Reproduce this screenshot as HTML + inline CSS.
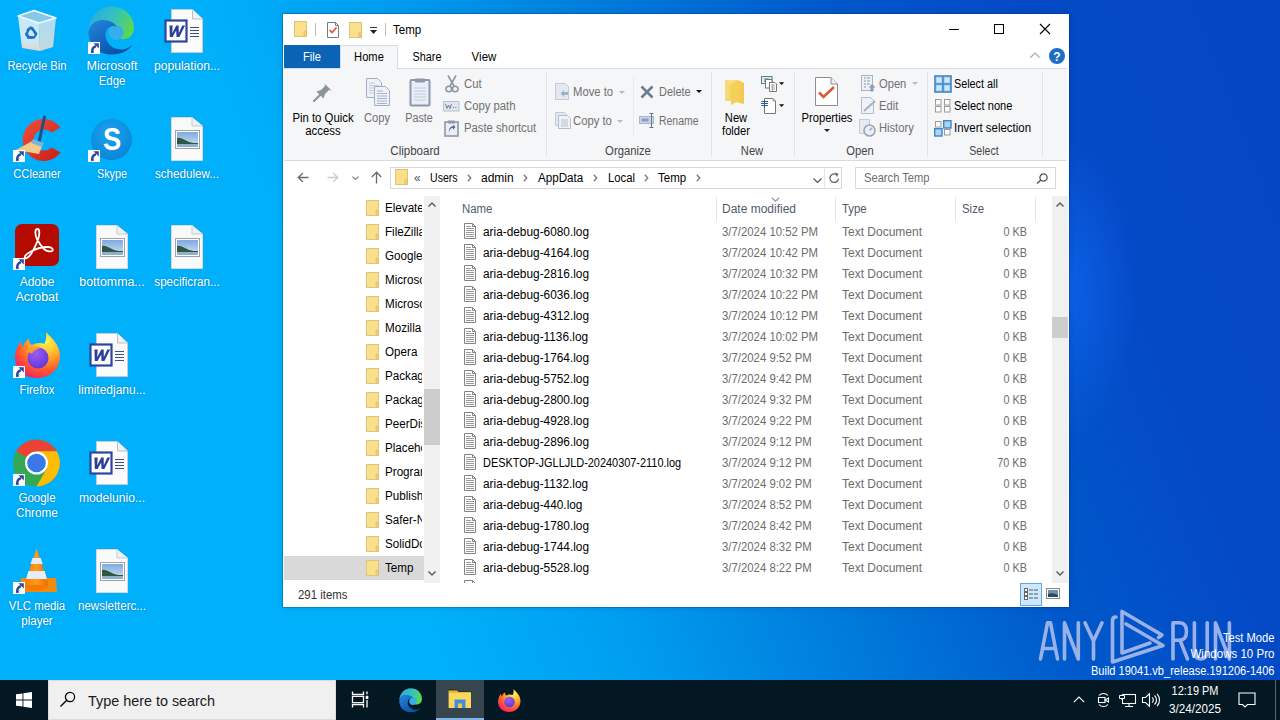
<!DOCTYPE html>
<html><head><meta charset="utf-8">
<style>
*{margin:0;padding:0;box-sizing:border-box}
html,body{width:1280px;height:720px;overflow:hidden}
body{position:relative;font-family:"Liberation Sans",sans-serif;font-size:12px;
background:linear-gradient(69deg,#00b0fa 0%,#00b0fa 30%,#009ef0 42%,#007cdc 56%,#0058ca 71%,#0449c6 84%,#0447c4 100%);}
.a{position:absolute}
.t{position:absolute;white-space:nowrap;line-height:1}
svg{overflow:visible}
</style></head><body>
<svg class="a" style="left:13px;top:6px" width="48" height="48" viewBox="0 0 48 48"><defs><linearGradient id="rbf" x1="0" y1="0" x2="0" y2="1"><stop offset="0" stop-color="#f4f8fb" stop-opacity="0.8"/><stop offset="0.7" stop-color="#eef3f6" stop-opacity="0.85"/><stop offset="1" stop-color="#f6d9c8" stop-opacity="0.9"/></linearGradient><linearGradient id="rbr" x1="0" y1="0" x2="0" y2="1"><stop offset="0" stop-color="#e3ebf0" stop-opacity="0.75"/><stop offset="1" stop-color="#eadfd8" stop-opacity="0.85"/></linearGradient></defs><path d="M5 10L26 17L27 45L9 42Z" fill="url(#rbf)"/><path d="M26 17L43 12L40 41L27 45Z" fill="url(#rbr)"/><path d="M5 10L21 4.5L43 12L26 17Z" fill="#a9cde6" fill-opacity="0.8" stroke="#f2f9fd" stroke-width="1.6" stroke-linejoin="round"/><g fill="#2b78d0"><path d="M14.5 22.5L18 20L21.5 23.5L19.5 25L17 22.8L15.2 25.5L13 24.2Z"/><path d="M22.5 25L24.5 28L22.5 31.5L20 31.5L21.8 28.5L20.5 26.5Z"/><path d="M12.5 27L14.5 26.5L16.5 30H19.5V32.5H15L12 29Z"/></g><g fill="none" stroke="#1f6cc4" stroke-width="2.3" stroke-linecap="round"><path d="M13.5 27.5L16.5 22.5"/><path d="M19 22L23 28"/><path d="M21 31.5H15"/></g></svg>
<div class="t" style="top:59.84px;font-size:12px;color:#fff;left:-63px;width:200px;text-align:center;transform:scaleX(0.93);transform-origin:center;text-shadow:0 0 2px rgba(0,0,0,.35);">Recycle Bin</div>
<svg class="a" style="left:86px;top:4px" width="50" height="52" viewBox="0 0 50 52"><defs><linearGradient id="ega" x1="0" y1="0.2" x2="1" y2="0.6"><stop offset="0" stop-color="#2aa6e6"/><stop offset="0.5" stop-color="#33c2c0"/><stop offset="1" stop-color="#5ed84c"/></linearGradient><linearGradient id="egb" x1="0" y1="0" x2="0.8" y2="1"><stop offset="0" stop-color="#2388dc"/><stop offset="0.6" stop-color="#1262bd"/><stop offset="1" stop-color="#0f4c9e"/></linearGradient></defs><path d="M2.5 28C2.5 13 13 2.5 25.5 2.5C38 2.5 48 12 48 23.5C48 30.5 43.5 35 37 35C31 35 27.5 31.5 27.5 27.5C27.5 21 21 16.5 15 16.5C9 16.5 4 21 2.5 28Z" fill="url(#ega)"/><circle cx="30" cy="28.5" r="7.5" fill="#36aee8"/><path d="M2.5 28C4 20 10 16 16.5 16C24 16 30 19.5 30.5 23C27 20.5 19.5 23 19.5 31C19.5 40 28 46.5 37 45.5C41 45 44 43 46.5 40.5C42.5 47 35 50.5 25.5 50.5C12 50.5 2.5 40.5 2.5 28Z" fill="url(#egb)"/></svg>
<svg class="a" style="left:88px;top:42px" width="12" height="12" viewBox="0 0 12 12"><rect x="0" y="0" width="12" height="12" fill="#fbfdff"/><path d="M4.6 11C3.6 7.5 5 4.8 8 4.2" fill="none" stroke="#2f4a94" stroke-width="2.6"/><path d="M5.5 1.3H10.8V6.6Z" fill="#2f4a94"/></svg>
<div class="t" style="top:59.84px;font-size:12px;color:#fff;left:12px;width:200px;text-align:center;transform:scaleX(1.05);transform-origin:center;text-shadow:0 0 2px rgba(0,0,0,.35);">Microsoft</div>
<div class="t" style="top:74.84px;font-size:12px;color:#fff;left:12px;width:200px;text-align:center;transform:scaleX(0.95);transform-origin:center;text-shadow:0 0 2px rgba(0,0,0,.35);">Edge</div>
<svg class="a" style="left:164px;top:6px" width="48" height="48" viewBox="0 0 48 48"><path d="M7.5 3.5H28.5L38.5 13V46.5H7.5Z" fill="#fbfbfb" stroke="#c8ccd2"/><path d="M28.5 3.5V13H38.5" fill="#f0f2f4" stroke="#b9bec6"/><path d="M26 21.5H35M26 24.5H35M26 27.5H35M26 30.5H35" stroke="#3b4f8c" stroke-width="1.1"/><rect x="1.5" y="14.5" width="21" height="21" fill="#fff" stroke="#2c45a0" stroke-width="2.2"/><path d="M4.2 19.5H7.4L8.6 27.2L11 19.5H13.4L15.2 27.2L17 19.5H19.8L16.6 31H13.7L12 24.5L9.8 31H7Z" fill="#2a3f98" transform="translate(5.4 0) skewX(-12)"/></svg>
<div class="t" style="top:59.84px;font-size:12px;color:#fff;left:87px;width:200px;text-align:center;transform:scaleX(1.01);transform-origin:center;text-shadow:0 0 2px rgba(0,0,0,.35);">population...</div>
<svg class="a" style="left:13px;top:114px" width="48" height="48" viewBox="0 0 48 48"><defs><linearGradient id="cc" x1="0" y1="0" x2="1" y2="1"><stop offset="0" stop-color="#f0503a"/><stop offset="1" stop-color="#c81e18"/></linearGradient></defs><path d="M47.5 13.5A21 21 0 1 0 47.5 38.5L38.5 33.5A10.5 10.5 0 1 1 38.5 18.5Z" fill="url(#cc)"/><path d="M31.5 3L26 28" stroke="#1d4f8c" stroke-width="3" stroke-linecap="round"/><path d="M21 26L30 30L26 40L3 36Z" fill="#f3c98c"/><path d="M20 25L31 29L29 33L18 29Z" fill="#7fb2d8"/></svg>
<svg class="a" style="left:13px;top:150px" width="12" height="12" viewBox="0 0 12 12"><rect x="0" y="0" width="12" height="12" fill="#fbfdff"/><path d="M4.6 11C3.6 7.5 5 4.8 8 4.2" fill="none" stroke="#2f4a94" stroke-width="2.6"/><path d="M5.5 1.3H10.8V6.6Z" fill="#2f4a94"/></svg>
<div class="t" style="top:167.84px;font-size:12px;color:#fff;left:-63px;width:200px;text-align:center;transform:scaleX(0.94);transform-origin:center;text-shadow:0 0 2px rgba(0,0,0,.35);">CCleaner</div>
<svg class="a" style="left:88px;top:114px" width="48" height="48" viewBox="0 0 48 48"><defs><radialGradient id="sk" cx="0.45" cy="0.35" r="0.7"><stop offset="0" stop-color="#1aa3ef"/><stop offset="1" stop-color="#0a84d8"/></radialGradient></defs><circle cx="23.5" cy="25.5" r="20.5" fill="url(#sk)"/><text x="0" y="0" font-family="Liberation Sans" font-weight="bold" font-size="31" fill="#fff" text-anchor="middle" transform="translate(24 36) scale(0.88 1)">S</text></svg>
<svg class="a" style="left:88px;top:150px" width="12" height="12" viewBox="0 0 12 12"><rect x="0" y="0" width="12" height="12" fill="#fbfdff"/><path d="M4.6 11C3.6 7.5 5 4.8 8 4.2" fill="none" stroke="#2f4a94" stroke-width="2.6"/><path d="M5.5 1.3H10.8V6.6Z" fill="#2f4a94"/></svg>
<div class="t" style="top:167.84px;font-size:12px;color:#fff;left:12px;width:200px;text-align:center;transform:scaleX(0.9);transform-origin:center;text-shadow:0 0 2px rgba(0,0,0,.35);">Skype</div>
<svg class="a" style="left:164px;top:114px" width="48" height="48" viewBox="0 0 48 48"><path d="M7.5 3.5H28L38.5 12V46.5H7.5Z" fill="#f9f9fa" stroke="#d6d9dd"/><path d="M28 3.5V12H38.5" fill="#eef0f3" stroke="#c6cbd1"/><rect x="11.5" y="16.5" width="24" height="18" fill="#fff" stroke="#9aa3ad"/><defs><linearGradient id="sky" x1="0" y1="0" x2="0" y2="1"><stop offset="0" stop-color="#7fa9e0"/><stop offset="1" stop-color="#d0e2f2"/></linearGradient></defs><rect x="13" y="18" width="21" height="15" fill="url(#sky)"/><path d="M13 24C17 23 20 26 25 28C28 29 31 29 34 29V31H13Z" fill="#2f5640"/><rect x="13" y="30" width="21" height="3" fill="#8fb0cf"/></svg>
<div class="t" style="top:167.84px;font-size:12px;color:#fff;left:87px;width:200px;text-align:center;transform:scaleX(0.97);transform-origin:center;text-shadow:0 0 2px rgba(0,0,0,.35);">schedulew...</div>
<svg class="a" style="left:13px;top:222px" width="48" height="48" viewBox="0 0 48 48"><rect x="2" y="2" width="44" height="42" rx="7" fill="#b30b00"/><path d="M24.5 7C21.5 7 22 13 24 17C26 21 29 25 31 27C33 29 37 30 39 29C41 28 39 25 35 25C30 25 22 27 17 30C13 32 11 35 12 36C13 37 16 35 18 32C21 27 24 21 25.5 16C26.5 12 27 7 24.5 7Z" fill="none" stroke="#fff" stroke-width="1.8"/></svg>
<svg class="a" style="left:13px;top:258px" width="12" height="12" viewBox="0 0 12 12"><rect x="0" y="0" width="12" height="12" fill="#fbfdff"/><path d="M4.6 11C3.6 7.5 5 4.8 8 4.2" fill="none" stroke="#2f4a94" stroke-width="2.6"/><path d="M5.5 1.3H10.8V6.6Z" fill="#2f4a94"/></svg>
<div class="t" style="top:275.84px;font-size:12px;color:#fff;left:-63px;width:200px;text-align:center;text-shadow:0 0 2px rgba(0,0,0,.35);">Adobe</div>
<div class="t" style="top:290.84px;font-size:12px;color:#fff;left:-63px;width:200px;text-align:center;transform:scaleX(1.04);transform-origin:center;text-shadow:0 0 2px rgba(0,0,0,.35);">Acrobat</div>
<svg class="a" style="left:89px;top:222px" width="48" height="48" viewBox="0 0 48 48"><path d="M7.5 3.5H28L38.5 12V46.5H7.5Z" fill="#f9f9fa" stroke="#d6d9dd"/><path d="M28 3.5V12H38.5" fill="#eef0f3" stroke="#c6cbd1"/><rect x="11.5" y="16.5" width="24" height="18" fill="#fff" stroke="#9aa3ad"/><defs><linearGradient id="sky" x1="0" y1="0" x2="0" y2="1"><stop offset="0" stop-color="#7fa9e0"/><stop offset="1" stop-color="#d0e2f2"/></linearGradient></defs><rect x="13" y="18" width="21" height="15" fill="url(#sky)"/><path d="M13 24C17 23 20 26 25 28C28 29 31 29 34 29V31H13Z" fill="#2f5640"/><rect x="13" y="30" width="21" height="3" fill="#8fb0cf"/></svg>
<div class="t" style="top:275.84px;font-size:12px;color:#fff;left:12px;width:200px;text-align:center;transform:scaleX(1.03);transform-origin:center;text-shadow:0 0 2px rgba(0,0,0,.35);">bottomma...</div>
<svg class="a" style="left:164px;top:222px" width="48" height="48" viewBox="0 0 48 48"><path d="M7.5 3.5H28L38.5 12V46.5H7.5Z" fill="#f9f9fa" stroke="#d6d9dd"/><path d="M28 3.5V12H38.5" fill="#eef0f3" stroke="#c6cbd1"/><rect x="11.5" y="16.5" width="24" height="18" fill="#fff" stroke="#9aa3ad"/><defs><linearGradient id="sky" x1="0" y1="0" x2="0" y2="1"><stop offset="0" stop-color="#7fa9e0"/><stop offset="1" stop-color="#d0e2f2"/></linearGradient></defs><rect x="13" y="18" width="21" height="15" fill="url(#sky)"/><path d="M13 24C17 23 20 26 25 28C28 29 31 29 34 29V31H13Z" fill="#2f5640"/><rect x="13" y="30" width="21" height="3" fill="#8fb0cf"/></svg>
<div class="t" style="top:275.84px;font-size:12px;color:#fff;left:87px;width:200px;text-align:center;transform:scaleX(0.97);transform-origin:center;text-shadow:0 0 2px rgba(0,0,0,.35);">specificran...</div>
<svg class="a" style="left:13px;top:330px" width="48" height="48" viewBox="0 0 48 48"><defs><radialGradient id="ff1" cx="0.7" cy="0.2" r="0.9"><stop offset="0" stop-color="#fff44f"/><stop offset="0.35" stop-color="#ffb52c"/><stop offset="0.7" stop-color="#ff5a2c"/><stop offset="1" stop-color="#f5196e"/></radialGradient><radialGradient id="ff2" cx="0.4" cy="0.3" r="0.8"><stop offset="0" stop-color="#9d5cf5"/><stop offset="1" stop-color="#5b35d0"/></radialGradient></defs><path d="M33 2C38 8 47 14 47 26C47 39 37 48 24 48C11 48 2 39 2 27C2 19 6 14 8 11C8 14 9 16 10 17C11 13 13 10 16 9C16 12 17 14 19 15C22 13 28 12 31 14C34 10 33 5 33 2Z" fill="url(#ff1)"/><circle cx="25" cy="28" r="10.5" fill="url(#ff2)"/><path d="M12 22C15 18 22 16 27 19C23 19 20 21 19 24C17 22 14 22 12 22Z" fill="#ff9a2a"/></svg>
<svg class="a" style="left:13px;top:366px" width="12" height="12" viewBox="0 0 12 12"><rect x="0" y="0" width="12" height="12" fill="#fbfdff"/><path d="M4.6 11C3.6 7.5 5 4.8 8 4.2" fill="none" stroke="#2f4a94" stroke-width="2.6"/><path d="M5.5 1.3H10.8V6.6Z" fill="#2f4a94"/></svg>
<div class="t" style="top:383.84px;font-size:12px;color:#fff;left:-63px;width:200px;text-align:center;transform:scaleX(0.95);transform-origin:center;text-shadow:0 0 2px rgba(0,0,0,.35);">Firefox</div>
<svg class="a" style="left:89px;top:330px" width="48" height="48" viewBox="0 0 48 48"><path d="M7.5 3.5H28.5L38.5 13V46.5H7.5Z" fill="#fbfbfb" stroke="#c8ccd2"/><path d="M28.5 3.5V13H38.5" fill="#f0f2f4" stroke="#b9bec6"/><path d="M26 21.5H35M26 24.5H35M26 27.5H35M26 30.5H35" stroke="#3b4f8c" stroke-width="1.1"/><rect x="1.5" y="14.5" width="21" height="21" fill="#fff" stroke="#2c45a0" stroke-width="2.2"/><path d="M4.2 19.5H7.4L8.6 27.2L11 19.5H13.4L15.2 27.2L17 19.5H19.8L16.6 31H13.7L12 24.5L9.8 31H7Z" fill="#2a3f98" transform="translate(5.4 0) skewX(-12)"/></svg>
<div class="t" style="top:383.84px;font-size:12px;color:#fff;left:12px;width:200px;text-align:center;text-shadow:0 0 2px rgba(0,0,0,.35);">limitedjanu...</div>
<svg class="a" style="left:13px;top:438px" width="48" height="48" viewBox="0 0 48 48"><circle cx="23.5" cy="25" r="23.5" fill="#34a853"/><path d="M23.5 25L3.2 13.3A23.5 23.5 0 0 1 43.8 13.3H23.5Z" fill="#ea4335"/><path d="M23.5 13.3H43.8A23.5 23.5 0 0 1 23.5 48.5L33.6 31Z" fill="#fbbc04"/><circle cx="23.5" cy="25" r="11.5" fill="#fff"/><circle cx="23.5" cy="25" r="9.3" fill="#3b78e7"/></svg>
<svg class="a" style="left:13px;top:474px" width="12" height="12" viewBox="0 0 12 12"><rect x="0" y="0" width="12" height="12" fill="#fbfdff"/><path d="M4.6 11C3.6 7.5 5 4.8 8 4.2" fill="none" stroke="#2f4a94" stroke-width="2.6"/><path d="M5.5 1.3H10.8V6.6Z" fill="#2f4a94"/></svg>
<div class="t" style="top:491.84px;font-size:12px;color:#fff;left:-63px;width:200px;text-align:center;transform:scaleX(0.96);transform-origin:center;text-shadow:0 0 2px rgba(0,0,0,.35);">Google</div>
<div class="t" style="top:506.84px;font-size:12px;color:#fff;left:-63px;width:200px;text-align:center;transform:scaleX(0.98);transform-origin:center;text-shadow:0 0 2px rgba(0,0,0,.35);">Chrome</div>
<svg class="a" style="left:89px;top:438px" width="48" height="48" viewBox="0 0 48 48"><path d="M7.5 3.5H28.5L38.5 13V46.5H7.5Z" fill="#fbfbfb" stroke="#c8ccd2"/><path d="M28.5 3.5V13H38.5" fill="#f0f2f4" stroke="#b9bec6"/><path d="M26 21.5H35M26 24.5H35M26 27.5H35M26 30.5H35" stroke="#3b4f8c" stroke-width="1.1"/><rect x="1.5" y="14.5" width="21" height="21" fill="#fff" stroke="#2c45a0" stroke-width="2.2"/><path d="M4.2 19.5H7.4L8.6 27.2L11 19.5H13.4L15.2 27.2L17 19.5H19.8L16.6 31H13.7L12 24.5L9.8 31H7Z" fill="#2a3f98" transform="translate(5.4 0) skewX(-12)"/></svg>
<div class="t" style="top:491.84px;font-size:12px;color:#fff;left:12px;width:200px;text-align:center;transform:scaleX(1.01);transform-origin:center;text-shadow:0 0 2px rgba(0,0,0,.35);">modelunio...</div>
<svg class="a" style="left:13px;top:546px" width="48" height="48" viewBox="0 0 48 48"><defs><linearGradient id="vl" x1="0" x2="1"><stop offset="0" stop-color="#f57c00"/><stop offset="0.5" stop-color="#ff9a1f"/><stop offset="1" stop-color="#e86a00"/></linearGradient></defs><path d="M8 32H43L44 46H7Z" fill="#f08a10"/><path d="M23.6 2.5L35.5 39H11.5Z" fill="url(#vl)"/><path d="M19.5 12H27.7L29.7 18H17.5Z" fill="#e8edf5"/><path d="M15.5 25H31.7L34 33H13Z" fill="#e8edf5"/><path d="M11.5 39H35.5Q34 45 23.6 45Q13 45 11.5 39Z" fill="#f57c00"/></svg>
<svg class="a" style="left:13px;top:582px" width="12" height="12" viewBox="0 0 12 12"><rect x="0" y="0" width="12" height="12" fill="#fbfdff"/><path d="M4.6 11C3.6 7.5 5 4.8 8 4.2" fill="none" stroke="#2f4a94" stroke-width="2.6"/><path d="M5.5 1.3H10.8V6.6Z" fill="#2f4a94"/></svg>
<div class="t" style="top:599.84px;font-size:12px;color:#fff;left:-63px;width:200px;text-align:center;transform:scaleX(0.95);transform-origin:center;text-shadow:0 0 2px rgba(0,0,0,.35);">VLC media</div>
<div class="t" style="top:614.84px;font-size:12px;color:#fff;left:-63px;width:200px;text-align:center;transform:scaleX(0.96);transform-origin:center;text-shadow:0 0 2px rgba(0,0,0,.35);">player</div>
<svg class="a" style="left:89px;top:546px" width="48" height="48" viewBox="0 0 48 48"><path d="M7.5 3.5H28L38.5 12V46.5H7.5Z" fill="#f9f9fa" stroke="#d6d9dd"/><path d="M28 3.5V12H38.5" fill="#eef0f3" stroke="#c6cbd1"/><rect x="11.5" y="16.5" width="24" height="18" fill="#fff" stroke="#9aa3ad"/><defs><linearGradient id="sky" x1="0" y1="0" x2="0" y2="1"><stop offset="0" stop-color="#7fa9e0"/><stop offset="1" stop-color="#d0e2f2"/></linearGradient></defs><rect x="13" y="18" width="21" height="15" fill="url(#sky)"/><path d="M13 24C17 23 20 26 25 28C28 29 31 29 34 29V31H13Z" fill="#2f5640"/><rect x="13" y="30" width="21" height="3" fill="#8fb0cf"/></svg>
<div class="t" style="top:599.84px;font-size:12px;color:#fff;left:12px;width:200px;text-align:center;transform:scaleX(0.96);transform-origin:center;text-shadow:0 0 2px rgba(0,0,0,.35);">newsletterc...</div>
<div class="a" style="left:0px;top:0px;width:1280px;height:680px;background:radial-gradient(ellipse 70px 150px at 1068px 290px,rgba(20,110,255,0.55),rgba(20,110,255,0) 100%)"></div>
<div class="a" style="left:283px;top:14px;width:786px;height:593px;background:#fff;box-shadow:0 0 0 1px rgba(0,50,90,0.28),0 0 6px rgba(0,30,80,0.18);"></div>
<svg class="a" style="left:294px;top:21px" width="13" height="16" viewBox="0 0 13 16"><rect x="0.5" y="0.5" width="12" height="15" fill="#f8d775" stroke="#dcc47c"/><rect x="1" y="1" width="11" height="14" fill="#fbe08c"/><rect x="10" y="10" width="2.5" height="5.5" rx="1" fill="#f6d16a" stroke="#d9bd6d" stroke-width="0.8"/></svg>
<div class="a" style="left:315px;top:23px;width:1px;height:13px;background:#b9b9b9"></div>
<svg class="a" style="left:327px;top:22px" width="12" height="16" viewBox="0 0 12 16"><path d="M0.5 0.5H8.5L11.5 3.5V15.5H0.5Z" fill="#fff" stroke="#7b7b7b"/><path d="M8.5 0.5V3.5H11.5" fill="none" stroke="#7b7b7b"/><path d="M2.5 8L5 10.5L9.5 5.5" fill="none" stroke="#d9503a" stroke-width="1.6"/></svg>
<svg class="a" style="left:349px;top:22px" width="13" height="16" viewBox="0 0 13 16"><rect x="0.5" y="0.5" width="12" height="15" fill="#f8d775" stroke="#dcc47c"/><rect x="1" y="1" width="11" height="14" fill="#fbe08c"/><rect x="10" y="10" width="2.5" height="5.5" rx="1" fill="#f6d16a" stroke="#d9bd6d" stroke-width="0.8"/></svg>
<div class="a" style="left:370px;top:27px;width:7px;height:1px;background:#333"></div>
<svg class="a" style="left:370px;top:30px" width="7" height="4" viewBox="0 0 7 4"><path d="M0 0H7L3.5 4Z" fill="#222"/></svg>
<div class="a" style="left:385px;top:23px;width:1px;height:13px;background:#b9b9b9"></div>
<div class="t" style="top:23.84px;font-size:12px;color:#000;left:393px;transform:scaleX(0.96);transform-origin:left;">Temp</div>
<div class="a" style="left:949px;top:29px;width:10px;height:1px;background:#000"></div>
<div class="a" style="left:994px;top:24px;width:10px;height:10px;border:1px solid #000"></div>
<svg class="a" style="left:1040px;top:24px" width="10" height="10" viewBox="0 0 10 10"><path d="M0 0L10 10M10 0L0 10" stroke="#000" stroke-width="1.1"/></svg>
<div class="a" style="left:284px;top:45px;width:56px;height:23px;background:#0a63b5"></div>
<div class="t" style="top:50.84px;font-size:12px;color:#fff;left:212px;width:200px;text-align:center;transform:scaleX(0.93);transform-origin:center;">File</div>
<div class="a" style="left:340px;top:45px;width:58px;height:24px;background:#f5f6f7;border:1px solid #dadbdc;border-bottom:none"></div>
<div class="t" style="top:50.84px;font-size:12px;color:#000;left:269px;width:200px;text-align:center;transform:scaleX(0.93);transform-origin:center;">Home</div>
<div class="t" style="top:50.84px;font-size:12px;color:#000;left:327px;width:200px;text-align:center;transform:scaleX(0.9);transform-origin:center;">Share</div>
<div class="t" style="top:50.84px;font-size:12px;color:#000;left:383.5px;width:200px;text-align:center;transform:scaleX(0.96);transform-origin:center;">View</div>
<svg class="a" style="left:1030px;top:52px" width="10" height="6" viewBox="0 0 10 6"><path d="M0.5 5.5L5 1L9.5 5.5" fill="none" stroke="#a9a9a9" stroke-width="1.2"/></svg>
<svg class="a" style="left:1049px;top:48px" width="16" height="16" viewBox="0 0 16 16"><circle cx="8" cy="8" r="8" fill="#1c6fc4"/><text x="8" y="12.5" font-family="Liberation Sans" font-weight="bold" font-size="12" fill="#fff" text-anchor="middle">?</text></svg>
<div class="a" style="left:284px;top:68px;width:783px;height:93px;background:#f5f6f7;border-top:1px solid #dadbdc;border-bottom:1px solid #dadbdc"></div>
<div class="a" style="left:341px;top:67px;width:56px;height:3px;background:#f5f6f7"></div>
<div class="a" style="left:546px;top:72px;width:1px;height:84px;background:#e2e3e4"></div>
<div class="a" style="left:711px;top:72px;width:1px;height:84px;background:#e2e3e4"></div>
<div class="a" style="left:794px;top:72px;width:1px;height:84px;background:#e2e3e4"></div>
<div class="a" style="left:927px;top:72px;width:1px;height:84px;background:#e2e3e4"></div>
<div class="a" style="left:1042px;top:72px;width:1px;height:84px;background:#e2e3e4"></div>
<div class="a" style="left:633px;top:77px;width:1px;height:58px;background:#e8e9ea"></div>
<div class="t" style="top:145.44px;font-size:12px;color:#444;left:314.5px;width:200px;text-align:center;transform:scaleX(0.96);transform-origin:center;">Clipboard</div>
<div class="t" style="top:145.44px;font-size:12px;color:#444;left:527.5px;width:200px;text-align:center;transform:scaleX(0.94);transform-origin:center;">Organize</div>
<div class="t" style="top:145.44px;font-size:12px;color:#444;left:652px;width:200px;text-align:center;transform:scaleX(0.93);transform-origin:center;">New</div>
<div class="t" style="top:145.44px;font-size:12px;color:#444;left:759.5px;width:200px;text-align:center;transform:scaleX(0.93);transform-origin:center;">Open</div>
<div class="t" style="top:145.44px;font-size:12px;color:#444;left:884px;width:200px;text-align:center;transform:scaleX(0.88);transform-origin:center;">Select</div>
<div class="t" style="top:112.04px;font-size:12px;color:#000;left:223px;width:200px;text-align:center;transform:scaleX(0.946);transform-origin:center;">Pin to Quick</div>
<div class="t" style="top:124.84px;font-size:12px;color:#000;left:223px;width:200px;text-align:center;transform:scaleX(0.95);transform-origin:center;">access</div>
<div class="t" style="top:112.04px;font-size:12px;color:#707070;left:277.3px;width:200px;text-align:center;transform:scaleX(0.93);transform-origin:center;">Copy</div>
<div class="t" style="top:112.04px;font-size:12px;color:#707070;left:319.3px;width:200px;text-align:center;transform:scaleX(0.9);transform-origin:center;">Paste</div>
<div class="t" style="top:111.84px;font-size:12px;color:#000;left:636px;width:200px;text-align:center;transform:scaleX(0.93);transform-origin:center;">New</div>
<div class="t" style="top:124.84px;font-size:12px;color:#000;left:636px;width:200px;text-align:center;transform:scaleX(0.93);transform-origin:center;">folder</div>
<div class="t" style="top:112.04px;font-size:12px;color:#000;left:726.8px;width:200px;text-align:center;transform:scaleX(0.93);transform-origin:center;">Properties</div>
<svg class="a" style="left:824px;top:129px" width="6" height="3" viewBox="0 0 6 3"><path d="M0 0H6L3 3Z" fill="#222"/></svg>
<div class="t" style="top:77.84px;font-size:12px;color:#707070;left:463.6px;transform:scaleX(0.94);transform-origin:left;">Cut</div>
<div class="t" style="top:100.04px;font-size:12px;color:#707070;left:463.6px;transform:scaleX(0.94);transform-origin:left;">Copy path</div>
<div class="t" style="top:121.64px;font-size:12px;color:#707070;left:463.6px;transform:scaleX(0.94);transform-origin:left;">Paste shortcut</div>
<div class="t" style="top:86.24px;font-size:12px;color:#707070;left:573.3px;transform:scaleX(0.94);transform-origin:left;">Move to</div>
<svg class="a" style="left:619px;top:91px" width="6" height="3" viewBox="0 0 6 3"><path d="M0 0H6L3 3Z" fill="#bbb"/></svg>
<div class="t" style="top:114.64px;font-size:12px;color:#707070;left:573.3px;transform:scaleX(0.94);transform-origin:left;">Copy to</div>
<svg class="a" style="left:617px;top:120px" width="6" height="3" viewBox="0 0 6 3"><path d="M0 0H6L3 3Z" fill="#bbb"/></svg>
<div class="t" style="top:86.24px;font-size:12px;color:#707070;left:658.75px;transform:scaleX(0.91);transform-origin:left;">Delete</div>
<svg class="a" style="left:696px;top:90px" width="6" height="3" viewBox="0 0 6 3"><path d="M0 0H6L3 3Z" fill="#111"/></svg>
<div class="t" style="top:115.34px;font-size:12px;color:#707070;left:658.75px;transform:scaleX(0.87);transform-origin:left;">Rename</div>
<div class="t" style="top:77.84px;font-size:12px;color:#707070;left:878.9px;transform:scaleX(0.93);transform-origin:left;">Open</div>
<svg class="a" style="left:912px;top:82px" width="6" height="3" viewBox="0 0 6 3"><path d="M0 0H6L3 3Z" fill="#bbb"/></svg>
<div class="t" style="top:100.04px;font-size:12px;color:#707070;left:878.9px;transform:scaleX(0.93);transform-origin:left;">Edit</div>
<div class="t" style="top:121.64px;font-size:12px;color:#707070;left:878.9px;transform:scaleX(0.93);transform-origin:left;">History</div>
<div class="t" style="top:78.04px;font-size:12px;color:#000;left:954.4px;transform:scaleX(0.9);transform-origin:left;">Select all</div>
<div class="t" style="top:100.14px;font-size:12px;color:#000;left:954.4px;transform:scaleX(0.92);transform-origin:left;">Select none</div>
<div class="t" style="top:121.64px;font-size:12px;color:#000;left:954.4px;transform:scaleX(0.954);transform-origin:left;">Invert selection</div>
<svg class="a" style="left:297px;top:172px" width="12" height="11" viewBox="0 0 12 11"><path d="M11.5 5.5H1.5M6 1L1.2 5.5L6 10" fill="none" stroke="#6b6b6b" stroke-width="1.3"/></svg>
<svg class="a" style="left:327px;top:172px" width="12" height="11" viewBox="0 0 12 11"><path d="M0.5 5.5H10.5M6 1L10.8 5.5L6 10" fill="none" stroke="#cdcdcd" stroke-width="1.3"/></svg>
<svg class="a" style="left:352px;top:176px" width="7" height="4" viewBox="0 0 7 4"><path d="M0.5 0.5L3.5 3.5L6.5 0.5" fill="none" stroke="#888" stroke-width="1.1"/></svg>
<svg class="a" style="left:371px;top:171px" width="11" height="13" viewBox="0 0 11 13"><path d="M5.5 12.5V1.5M0.8 6L5.5 1.2L10.2 6" fill="none" stroke="#6b6b6b" stroke-width="1.3"/></svg>
<div class="a" style="left:390px;top:167px;width:452px;height:22px;border:1px solid #d9d9d9;background:#fff"></div>
<div class="a" style="left:824px;top:168px;width:1px;height:20px;background:#e5e5e5"></div>
<svg class="a" style="left:395px;top:169px" width="13" height="16" viewBox="0 0 13 16"><rect x="0.5" y="0.5" width="12" height="15" fill="#f8d775" stroke="#dcc47c"/><rect x="1" y="1" width="11" height="14" fill="#fbe08c"/><rect x="10" y="10" width="2.5" height="5.5" rx="1" fill="#f6d16a" stroke="#d9bd6d" stroke-width="0.8"/></svg>
<div class="t" style="top:171.84px;font-size:12px;color:#555;left:414px;">«</div>
<div class="t" style="top:171.84px;font-size:12px;color:#000;left:430px;transform:scaleX(0.88);transform-origin:left;">Users</div>
<div class="t" style="top:171.84px;font-size:12px;color:#000;left:481px;">admin</div>
<div class="t" style="top:171.84px;font-size:12px;color:#000;left:537.8px;transform:scaleX(0.97);transform-origin:left;">AppData</div>
<div class="t" style="top:171.84px;font-size:12px;color:#000;left:607.5px;transform:scaleX(0.94);transform-origin:left;">Local</div>
<div class="t" style="top:171.84px;font-size:12px;color:#000;left:658px;transform:scaleX(0.96);transform-origin:left;">Temp</div>
<svg class="a" style="left:467px;top:174px" width="5" height="8" viewBox="0 0 5 8"><path d="M0.8 0.8L3.8 4L0.8 7.2" fill="none" stroke="#7a7a7a" stroke-width="1.3"/></svg>
<svg class="a" style="left:523px;top:174px" width="5" height="8" viewBox="0 0 5 8"><path d="M0.8 0.8L3.8 4L0.8 7.2" fill="none" stroke="#7a7a7a" stroke-width="1.3"/></svg>
<svg class="a" style="left:593px;top:174px" width="5" height="8" viewBox="0 0 5 8"><path d="M0.8 0.8L3.8 4L0.8 7.2" fill="none" stroke="#7a7a7a" stroke-width="1.3"/></svg>
<svg class="a" style="left:644px;top:174px" width="5" height="8" viewBox="0 0 5 8"><path d="M0.8 0.8L3.8 4L0.8 7.2" fill="none" stroke="#7a7a7a" stroke-width="1.3"/></svg>
<svg class="a" style="left:696px;top:174px" width="5" height="8" viewBox="0 0 5 8"><path d="M0.8 0.8L3.8 4L0.8 7.2" fill="none" stroke="#7a7a7a" stroke-width="1.3"/></svg>
<svg class="a" style="left:813px;top:178px" width="9" height="5" viewBox="0 0 9 5"><path d="M0.5 0.5L4.5 4.5L8.5 0.5" fill="none" stroke="#555" stroke-width="1.2"/></svg>
<svg class="a" style="left:829px;top:172px" width="11" height="12" viewBox="0 0 11 12"><path d="M9.5 6.5A4.3 4.3 0 1 1 7.5 2.5" fill="none" stroke="#666" stroke-width="1.3"/><path d="M6 0.5L9.5 1.8L7.8 5Z" fill="#666"/></svg>
<div class="a" style="left:855px;top:167px;width:201px;height:22px;border:1px solid #d9d9d9;background:#fff"></div>
<div class="t" style="top:171.84px;font-size:12px;color:#6d6d6d;left:863.8px;transform:scaleX(0.93);transform-origin:left;">Search Temp</div>
<svg class="a" style="left:1036px;top:173px" width="12" height="11" viewBox="0 0 12 11"><circle cx="7.5" cy="4.5" r="3.6" fill="none" stroke="#555" stroke-width="1.3"/><path d="M5 7L1 10.5" stroke="#555" stroke-width="1.6"/></svg>
<div class="a" style="left:284px;top:556px;width:140px;height:24px;background:#d9d9d9"></div>
<div class="a" style="left:284px;top:196px;width:138px;height:387px;overflow:hidden">
<svg class="a" style="left:82px;top:4px" width="13" height="16"><rect x="0.5" y="0.5" width="12" height="15" fill="#f8d775" stroke="#dcc47c"/><rect x="1" y="1" width="11" height="14" fill="#fbe08c"/><rect x="10" y="10" width="2.5" height="5.5" rx="1" fill="#f6d16a" stroke="#d9bd6d" stroke-width="0.8"/></svg>
<div class="t" style="left:101px;top:5.84px;font-size:12px;color:#000;transform:scaleX(0.97);transform-origin:left">ElevatedDiagnostics</div>
<svg class="a" style="left:82px;top:28px" width="13" height="16"><rect x="0.5" y="0.5" width="12" height="15" fill="#f8d775" stroke="#dcc47c"/><rect x="1" y="1" width="11" height="14" fill="#fbe08c"/><rect x="10" y="10" width="2.5" height="5.5" rx="1" fill="#f6d16a" stroke="#d9bd6d" stroke-width="0.8"/></svg>
<div class="t" style="left:101px;top:29.84px;font-size:12px;color:#000;transform:scaleX(0.97);transform-origin:left">FileZilla Server</div>
<svg class="a" style="left:82px;top:52px" width="13" height="16"><rect x="0.5" y="0.5" width="12" height="15" fill="#f8d775" stroke="#dcc47c"/><rect x="1" y="1" width="11" height="14" fill="#fbe08c"/><rect x="10" y="10" width="2.5" height="5.5" rx="1" fill="#f6d16a" stroke="#d9bd6d" stroke-width="0.8"/></svg>
<div class="t" style="left:101px;top:53.84px;font-size:12px;color:#000;transform:scaleX(0.97);transform-origin:left">Google</div>
<svg class="a" style="left:82px;top:76px" width="13" height="16"><rect x="0.5" y="0.5" width="12" height="15" fill="#f8d775" stroke="#dcc47c"/><rect x="1" y="1" width="11" height="14" fill="#fbe08c"/><rect x="10" y="10" width="2.5" height="5.5" rx="1" fill="#f6d16a" stroke="#d9bd6d" stroke-width="0.8"/></svg>
<div class="t" style="left:101px;top:77.84px;font-size:12px;color:#000;transform:scaleX(0.97);transform-origin:left">Microsoft</div>
<svg class="a" style="left:82px;top:100px" width="13" height="16"><rect x="0.5" y="0.5" width="12" height="15" fill="#f8d775" stroke="#dcc47c"/><rect x="1" y="1" width="11" height="14" fill="#fbe08c"/><rect x="10" y="10" width="2.5" height="5.5" rx="1" fill="#f6d16a" stroke="#d9bd6d" stroke-width="0.8"/></svg>
<div class="t" style="left:101px;top:101.84px;font-size:12px;color:#000;transform:scaleX(0.97);transform-origin:left">Microsoft Help</div>
<svg class="a" style="left:82px;top:124px" width="13" height="16"><rect x="0.5" y="0.5" width="12" height="15" fill="#f8d775" stroke="#dcc47c"/><rect x="1" y="1" width="11" height="14" fill="#fbe08c"/><rect x="10" y="10" width="2.5" height="5.5" rx="1" fill="#f6d16a" stroke="#d9bd6d" stroke-width="0.8"/></svg>
<div class="t" style="left:101px;top:125.84px;font-size:12px;color:#000;transform:scaleX(0.97);transform-origin:left">Mozilla</div>
<svg class="a" style="left:82px;top:148px" width="13" height="16"><rect x="0.5" y="0.5" width="12" height="15" fill="#f8d775" stroke="#dcc47c"/><rect x="1" y="1" width="11" height="14" fill="#fbe08c"/><rect x="10" y="10" width="2.5" height="5.5" rx="1" fill="#f6d16a" stroke="#d9bd6d" stroke-width="0.8"/></svg>
<div class="t" style="left:101px;top:149.84px;font-size:12px;color:#000;transform:scaleX(0.97);transform-origin:left">Opera</div>
<svg class="a" style="left:82px;top:172px" width="13" height="16"><rect x="0.5" y="0.5" width="12" height="15" fill="#f8d775" stroke="#dcc47c"/><rect x="1" y="1" width="11" height="14" fill="#fbe08c"/><rect x="10" y="10" width="2.5" height="5.5" rx="1" fill="#f6d16a" stroke="#d9bd6d" stroke-width="0.8"/></svg>
<div class="t" style="left:101px;top:173.84px;font-size:12px;color:#000;transform:scaleX(0.97);transform-origin:left">Packages</div>
<svg class="a" style="left:82px;top:196px" width="13" height="16"><rect x="0.5" y="0.5" width="12" height="15" fill="#f8d775" stroke="#dcc47c"/><rect x="1" y="1" width="11" height="14" fill="#fbe08c"/><rect x="10" y="10" width="2.5" height="5.5" rx="1" fill="#f6d16a" stroke="#d9bd6d" stroke-width="0.8"/></svg>
<div class="t" style="left:101px;top:197.84px;font-size:12px;color:#000;transform:scaleX(0.97);transform-origin:left">Package Cache</div>
<svg class="a" style="left:82px;top:220px" width="13" height="16"><rect x="0.5" y="0.5" width="12" height="15" fill="#f8d775" stroke="#dcc47c"/><rect x="1" y="1" width="11" height="14" fill="#fbe08c"/><rect x="10" y="10" width="2.5" height="5.5" rx="1" fill="#f6d16a" stroke="#d9bd6d" stroke-width="0.8"/></svg>
<div class="t" style="left:101px;top:221.84px;font-size:12px;color:#000;transform:scaleX(0.97);transform-origin:left">PeerDistRepub</div>
<svg class="a" style="left:82px;top:244px" width="13" height="16"><rect x="0.5" y="0.5" width="12" height="15" fill="#f8d775" stroke="#dcc47c"/><rect x="1" y="1" width="11" height="14" fill="#fbe08c"/><rect x="10" y="10" width="2.5" height="5.5" rx="1" fill="#f6d16a" stroke="#d9bd6d" stroke-width="0.8"/></svg>
<div class="t" style="left:101px;top:245.84px;font-size:12px;color:#000;transform:scaleX(0.97);transform-origin:left">PlaceholderTileLogoFolder</div>
<svg class="a" style="left:82px;top:268px" width="13" height="16"><rect x="0.5" y="0.5" width="12" height="15" fill="#f8d775" stroke="#dcc47c"/><rect x="1" y="1" width="11" height="14" fill="#fbe08c"/><rect x="10" y="10" width="2.5" height="5.5" rx="1" fill="#f6d16a" stroke="#d9bd6d" stroke-width="0.8"/></svg>
<div class="t" style="left:101px;top:269.84px;font-size:12px;color:#000;transform:scaleX(0.97);transform-origin:left">Programs</div>
<svg class="a" style="left:82px;top:292px" width="13" height="16"><rect x="0.5" y="0.5" width="12" height="15" fill="#f8d775" stroke="#dcc47c"/><rect x="1" y="1" width="11" height="14" fill="#fbe08c"/><rect x="10" y="10" width="2.5" height="5.5" rx="1" fill="#f6d16a" stroke="#d9bd6d" stroke-width="0.8"/></svg>
<div class="t" style="left:101px;top:293.84px;font-size:12px;color:#000;transform:scaleX(0.97);transform-origin:left">Publishers</div>
<svg class="a" style="left:82px;top:316px" width="13" height="16"><rect x="0.5" y="0.5" width="12" height="15" fill="#f8d775" stroke="#dcc47c"/><rect x="1" y="1" width="11" height="14" fill="#fbe08c"/><rect x="10" y="10" width="2.5" height="5.5" rx="1" fill="#f6d16a" stroke="#d9bd6d" stroke-width="0.8"/></svg>
<div class="t" style="left:101px;top:317.84px;font-size:12px;color:#000;transform:scaleX(0.97);transform-origin:left">Safer-Networking</div>
<svg class="a" style="left:82px;top:340px" width="13" height="16"><rect x="0.5" y="0.5" width="12" height="15" fill="#f8d775" stroke="#dcc47c"/><rect x="1" y="1" width="11" height="14" fill="#fbe08c"/><rect x="10" y="10" width="2.5" height="5.5" rx="1" fill="#f6d16a" stroke="#d9bd6d" stroke-width="0.8"/></svg>
<div class="t" style="left:101px;top:341.84px;font-size:12px;color:#000;transform:scaleX(0.97);transform-origin:left">SolidDocuments</div>
<svg class="a" style="left:82px;top:364px" width="13" height="16"><rect x="0.5" y="0.5" width="12" height="15" fill="#f8d775" stroke="#dcc47c"/><rect x="1" y="1" width="11" height="14" fill="#fbe08c"/><rect x="10" y="10" width="2.5" height="5.5" rx="1" fill="#f6d16a" stroke="#d9bd6d" stroke-width="0.8"/></svg>
<div class="t" style="left:101px;top:365.84px;font-size:12px;color:#000;transform:scaleX(0.97);transform-origin:left">Temp</div>
</div>
<div class="a" style="left:424px;top:196px;width:16px;height:387px;background:#f0f0f0"></div>
<div class="a" style="left:424px;top:389px;width:16px;height:56px;background:#cdcdcd"></div>
<svg class="a" style="left:428px;top:202px" width="8" height="5" viewBox="0 0 8 5"><path d="M0.5 4.5L4 1L7.5 4.5" fill="none" stroke="#606060" stroke-width="1.5"/></svg>
<svg class="a" style="left:428px;top:571px" width="8" height="5" viewBox="0 0 8 5"><path d="M0.5 0.5L4 4L7.5 0.5" fill="none" stroke="#606060" stroke-width="1.5"/></svg>
<div class="t" style="top:202.84px;font-size:12px;color:#4f5b6c;left:461.6px;transform:scaleX(0.95);transform-origin:left;">Name</div>
<div class="t" style="top:202.84px;font-size:12px;color:#4f5b6c;left:722px;">Date modified</div>
<div class="t" style="top:202.84px;font-size:12px;color:#4f5b6c;left:842.3px;transform:scaleX(0.95);transform-origin:left;">Type</div>
<div class="t" style="top:202.84px;font-size:12px;color:#4f5b6c;left:962.4px;transform:scaleX(0.95);transform-origin:left;">Size</div>
<div class="a" style="left:716px;top:197px;width:1px;height:24px;background:#e5e5e5"></div>
<div class="a" style="left:835px;top:197px;width:1px;height:24px;background:#e5e5e5"></div>
<div class="a" style="left:955px;top:197px;width:1px;height:24px;background:#e5e5e5"></div>
<div class="a" style="left:1035px;top:197px;width:1px;height:24px;background:#e5e5e5"></div>
<svg class="a" style="left:771px;top:197px" width="9" height="5" viewBox="0 0 9 5"><path d="M0.8 0.8L4.5 4.3L8.2 0.8" fill="none" stroke="#9aa0a8" stroke-width="1.2"/></svg>
<div class="a" style="left:441px;top:221px;width:610px;height:362px;overflow:hidden">
<svg class="a" style="left:23px;top:2px" width="12" height="16"><path d="M0.5 0.5H8.5L11.5 3.5V15.5H0.5Z" fill="#fff" stroke="#838383"/><path d="M8.5 0.5V3.5H11.5" fill="none" stroke="#838383"/><path d="M2 3.5H7M2 5.5H10M2 7.5H10M2 9.5H10M2 11.5H10M2 13.5H10" stroke="#9a9a9a" stroke-width="1"/></svg>
<div class="t" style="left:41.5px;top:4.84px;color:#000;transform:scaleX(0.987);transform-origin:left">aria-debug-6080.log</div>
<div class="t" style="left:281.20000000000005px;top:4.84px;color:#6d6d6d;transform:scaleX(0.947);transform-origin:left">3/7/2024 10:52 PM</div>
<div class="t" style="left:401px;top:4.84px;color:#6d6d6d">Text Document</div>
<div class="t" style="right:24px;top:4.84px;color:#6d6d6d;transform:scaleX(0.9);transform-origin:right">0 KB</div>
<svg class="a" style="left:23px;top:23px" width="12" height="16"><path d="M0.5 0.5H8.5L11.5 3.5V15.5H0.5Z" fill="#fff" stroke="#838383"/><path d="M8.5 0.5V3.5H11.5" fill="none" stroke="#838383"/><path d="M2 3.5H7M2 5.5H10M2 7.5H10M2 9.5H10M2 11.5H10M2 13.5H10" stroke="#9a9a9a" stroke-width="1"/></svg>
<div class="t" style="left:41.5px;top:25.84px;color:#000;transform:scaleX(0.987);transform-origin:left">aria-debug-4164.log</div>
<div class="t" style="left:281.20000000000005px;top:25.84px;color:#6d6d6d;transform:scaleX(0.947);transform-origin:left">3/7/2024 10:42 PM</div>
<div class="t" style="left:401px;top:25.84px;color:#6d6d6d">Text Document</div>
<div class="t" style="right:24px;top:25.84px;color:#6d6d6d;transform:scaleX(0.9);transform-origin:right">0 KB</div>
<svg class="a" style="left:23px;top:44px" width="12" height="16"><path d="M0.5 0.5H8.5L11.5 3.5V15.5H0.5Z" fill="#fff" stroke="#838383"/><path d="M8.5 0.5V3.5H11.5" fill="none" stroke="#838383"/><path d="M2 3.5H7M2 5.5H10M2 7.5H10M2 9.5H10M2 11.5H10M2 13.5H10" stroke="#9a9a9a" stroke-width="1"/></svg>
<div class="t" style="left:41.5px;top:46.84px;color:#000;transform:scaleX(0.987);transform-origin:left">aria-debug-2816.log</div>
<div class="t" style="left:281.20000000000005px;top:46.84px;color:#6d6d6d;transform:scaleX(0.947);transform-origin:left">3/7/2024 10:32 PM</div>
<div class="t" style="left:401px;top:46.84px;color:#6d6d6d">Text Document</div>
<div class="t" style="right:24px;top:46.84px;color:#6d6d6d;transform:scaleX(0.9);transform-origin:right">0 KB</div>
<svg class="a" style="left:23px;top:65px" width="12" height="16"><path d="M0.5 0.5H8.5L11.5 3.5V15.5H0.5Z" fill="#fff" stroke="#838383"/><path d="M8.5 0.5V3.5H11.5" fill="none" stroke="#838383"/><path d="M2 3.5H7M2 5.5H10M2 7.5H10M2 9.5H10M2 11.5H10M2 13.5H10" stroke="#9a9a9a" stroke-width="1"/></svg>
<div class="t" style="left:41.5px;top:67.84px;color:#000;transform:scaleX(0.987);transform-origin:left">aria-debug-6036.log</div>
<div class="t" style="left:281.20000000000005px;top:67.84px;color:#6d6d6d;transform:scaleX(0.947);transform-origin:left">3/7/2024 10:22 PM</div>
<div class="t" style="left:401px;top:67.84px;color:#6d6d6d">Text Document</div>
<div class="t" style="right:24px;top:67.84px;color:#6d6d6d;transform:scaleX(0.9);transform-origin:right">0 KB</div>
<svg class="a" style="left:23px;top:86px" width="12" height="16"><path d="M0.5 0.5H8.5L11.5 3.5V15.5H0.5Z" fill="#fff" stroke="#838383"/><path d="M8.5 0.5V3.5H11.5" fill="none" stroke="#838383"/><path d="M2 3.5H7M2 5.5H10M2 7.5H10M2 9.5H10M2 11.5H10M2 13.5H10" stroke="#9a9a9a" stroke-width="1"/></svg>
<div class="t" style="left:41.5px;top:88.84px;color:#000;transform:scaleX(0.987);transform-origin:left">aria-debug-4312.log</div>
<div class="t" style="left:281.20000000000005px;top:88.84px;color:#6d6d6d;transform:scaleX(0.947);transform-origin:left">3/7/2024 10:12 PM</div>
<div class="t" style="left:401px;top:88.84px;color:#6d6d6d">Text Document</div>
<div class="t" style="right:24px;top:88.84px;color:#6d6d6d;transform:scaleX(0.9);transform-origin:right">0 KB</div>
<svg class="a" style="left:23px;top:107px" width="12" height="16"><path d="M0.5 0.5H8.5L11.5 3.5V15.5H0.5Z" fill="#fff" stroke="#838383"/><path d="M8.5 0.5V3.5H11.5" fill="none" stroke="#838383"/><path d="M2 3.5H7M2 5.5H10M2 7.5H10M2 9.5H10M2 11.5H10M2 13.5H10" stroke="#9a9a9a" stroke-width="1"/></svg>
<div class="t" style="left:41.5px;top:109.84px;color:#000;transform:scaleX(0.987);transform-origin:left">aria-debug-1136.log</div>
<div class="t" style="left:281.20000000000005px;top:109.84px;color:#6d6d6d;transform:scaleX(0.947);transform-origin:left">3/7/2024 10:02 PM</div>
<div class="t" style="left:401px;top:109.84px;color:#6d6d6d">Text Document</div>
<div class="t" style="right:24px;top:109.84px;color:#6d6d6d;transform:scaleX(0.9);transform-origin:right">0 KB</div>
<svg class="a" style="left:23px;top:128px" width="12" height="16"><path d="M0.5 0.5H8.5L11.5 3.5V15.5H0.5Z" fill="#fff" stroke="#838383"/><path d="M8.5 0.5V3.5H11.5" fill="none" stroke="#838383"/><path d="M2 3.5H7M2 5.5H10M2 7.5H10M2 9.5H10M2 11.5H10M2 13.5H10" stroke="#9a9a9a" stroke-width="1"/></svg>
<div class="t" style="left:41.5px;top:130.84px;color:#000;transform:scaleX(0.987);transform-origin:left">aria-debug-1764.log</div>
<div class="t" style="left:281.20000000000005px;top:130.84px;color:#6d6d6d;transform:scaleX(0.947);transform-origin:left">3/7/2024 9:52 PM</div>
<div class="t" style="left:401px;top:130.84px;color:#6d6d6d">Text Document</div>
<div class="t" style="right:24px;top:130.84px;color:#6d6d6d;transform:scaleX(0.9);transform-origin:right">0 KB</div>
<svg class="a" style="left:23px;top:149px" width="12" height="16"><path d="M0.5 0.5H8.5L11.5 3.5V15.5H0.5Z" fill="#fff" stroke="#838383"/><path d="M8.5 0.5V3.5H11.5" fill="none" stroke="#838383"/><path d="M2 3.5H7M2 5.5H10M2 7.5H10M2 9.5H10M2 11.5H10M2 13.5H10" stroke="#9a9a9a" stroke-width="1"/></svg>
<div class="t" style="left:41.5px;top:151.84px;color:#000;transform:scaleX(0.987);transform-origin:left">aria-debug-5752.log</div>
<div class="t" style="left:281.20000000000005px;top:151.84px;color:#6d6d6d;transform:scaleX(0.947);transform-origin:left">3/7/2024 9:42 PM</div>
<div class="t" style="left:401px;top:151.84px;color:#6d6d6d">Text Document</div>
<div class="t" style="right:24px;top:151.84px;color:#6d6d6d;transform:scaleX(0.9);transform-origin:right">0 KB</div>
<svg class="a" style="left:23px;top:170px" width="12" height="16"><path d="M0.5 0.5H8.5L11.5 3.5V15.5H0.5Z" fill="#fff" stroke="#838383"/><path d="M8.5 0.5V3.5H11.5" fill="none" stroke="#838383"/><path d="M2 3.5H7M2 5.5H10M2 7.5H10M2 9.5H10M2 11.5H10M2 13.5H10" stroke="#9a9a9a" stroke-width="1"/></svg>
<div class="t" style="left:41.5px;top:172.84px;color:#000;transform:scaleX(0.987);transform-origin:left">aria-debug-2800.log</div>
<div class="t" style="left:281.20000000000005px;top:172.84px;color:#6d6d6d;transform:scaleX(0.947);transform-origin:left">3/7/2024 9:32 PM</div>
<div class="t" style="left:401px;top:172.84px;color:#6d6d6d">Text Document</div>
<div class="t" style="right:24px;top:172.84px;color:#6d6d6d;transform:scaleX(0.9);transform-origin:right">0 KB</div>
<svg class="a" style="left:23px;top:191px" width="12" height="16"><path d="M0.5 0.5H8.5L11.5 3.5V15.5H0.5Z" fill="#fff" stroke="#838383"/><path d="M8.5 0.5V3.5H11.5" fill="none" stroke="#838383"/><path d="M2 3.5H7M2 5.5H10M2 7.5H10M2 9.5H10M2 11.5H10M2 13.5H10" stroke="#9a9a9a" stroke-width="1"/></svg>
<div class="t" style="left:41.5px;top:193.84px;color:#000;transform:scaleX(0.987);transform-origin:left">aria-debug-4928.log</div>
<div class="t" style="left:281.20000000000005px;top:193.84px;color:#6d6d6d;transform:scaleX(0.947);transform-origin:left">3/7/2024 9:22 PM</div>
<div class="t" style="left:401px;top:193.84px;color:#6d6d6d">Text Document</div>
<div class="t" style="right:24px;top:193.84px;color:#6d6d6d;transform:scaleX(0.9);transform-origin:right">0 KB</div>
<svg class="a" style="left:23px;top:212px" width="12" height="16"><path d="M0.5 0.5H8.5L11.5 3.5V15.5H0.5Z" fill="#fff" stroke="#838383"/><path d="M8.5 0.5V3.5H11.5" fill="none" stroke="#838383"/><path d="M2 3.5H7M2 5.5H10M2 7.5H10M2 9.5H10M2 11.5H10M2 13.5H10" stroke="#9a9a9a" stroke-width="1"/></svg>
<div class="t" style="left:41.5px;top:214.84px;color:#000;transform:scaleX(0.987);transform-origin:left">aria-debug-2896.log</div>
<div class="t" style="left:281.20000000000005px;top:214.84px;color:#6d6d6d;transform:scaleX(0.947);transform-origin:left">3/7/2024 9:12 PM</div>
<div class="t" style="left:401px;top:214.84px;color:#6d6d6d">Text Document</div>
<div class="t" style="right:24px;top:214.84px;color:#6d6d6d;transform:scaleX(0.9);transform-origin:right">0 KB</div>
<svg class="a" style="left:23px;top:233px" width="12" height="16"><path d="M0.5 0.5H8.5L11.5 3.5V15.5H0.5Z" fill="#fff" stroke="#838383"/><path d="M8.5 0.5V3.5H11.5" fill="none" stroke="#838383"/><path d="M2 3.5H7M2 5.5H10M2 7.5H10M2 9.5H10M2 11.5H10M2 13.5H10" stroke="#9a9a9a" stroke-width="1"/></svg>
<div class="t" style="left:41.5px;top:235.84px;color:#000;transform:scaleX(0.91);transform-origin:left">DESKTOP-JGLLJLD-20240307-2110.log</div>
<div class="t" style="left:281.20000000000005px;top:235.84px;color:#6d6d6d;transform:scaleX(0.947);transform-origin:left">3/7/2024 9:12 PM</div>
<div class="t" style="left:401px;top:235.84px;color:#6d6d6d">Text Document</div>
<div class="t" style="right:24px;top:235.84px;color:#6d6d6d;transform:scaleX(0.9);transform-origin:right">70 KB</div>
<svg class="a" style="left:23px;top:254px" width="12" height="16"><path d="M0.5 0.5H8.5L11.5 3.5V15.5H0.5Z" fill="#fff" stroke="#838383"/><path d="M8.5 0.5V3.5H11.5" fill="none" stroke="#838383"/><path d="M2 3.5H7M2 5.5H10M2 7.5H10M2 9.5H10M2 11.5H10M2 13.5H10" stroke="#9a9a9a" stroke-width="1"/></svg>
<div class="t" style="left:41.5px;top:256.84px;color:#000;transform:scaleX(0.987);transform-origin:left">aria-debug-1132.log</div>
<div class="t" style="left:281.20000000000005px;top:256.84px;color:#6d6d6d;transform:scaleX(0.947);transform-origin:left">3/7/2024 9:02 PM</div>
<div class="t" style="left:401px;top:256.84px;color:#6d6d6d">Text Document</div>
<div class="t" style="right:24px;top:256.84px;color:#6d6d6d;transform:scaleX(0.9);transform-origin:right">0 KB</div>
<svg class="a" style="left:23px;top:275px" width="12" height="16"><path d="M0.5 0.5H8.5L11.5 3.5V15.5H0.5Z" fill="#fff" stroke="#838383"/><path d="M8.5 0.5V3.5H11.5" fill="none" stroke="#838383"/><path d="M2 3.5H7M2 5.5H10M2 7.5H10M2 9.5H10M2 11.5H10M2 13.5H10" stroke="#9a9a9a" stroke-width="1"/></svg>
<div class="t" style="left:41.5px;top:277.84px;color:#000;transform:scaleX(0.987);transform-origin:left">aria-debug-440.log</div>
<div class="t" style="left:281.20000000000005px;top:277.84px;color:#6d6d6d;transform:scaleX(0.947);transform-origin:left">3/7/2024 8:52 PM</div>
<div class="t" style="left:401px;top:277.84px;color:#6d6d6d">Text Document</div>
<div class="t" style="right:24px;top:277.84px;color:#6d6d6d;transform:scaleX(0.9);transform-origin:right">0 KB</div>
<svg class="a" style="left:23px;top:296px" width="12" height="16"><path d="M0.5 0.5H8.5L11.5 3.5V15.5H0.5Z" fill="#fff" stroke="#838383"/><path d="M8.5 0.5V3.5H11.5" fill="none" stroke="#838383"/><path d="M2 3.5H7M2 5.5H10M2 7.5H10M2 9.5H10M2 11.5H10M2 13.5H10" stroke="#9a9a9a" stroke-width="1"/></svg>
<div class="t" style="left:41.5px;top:298.84px;color:#000;transform:scaleX(0.987);transform-origin:left">aria-debug-1780.log</div>
<div class="t" style="left:281.20000000000005px;top:298.84px;color:#6d6d6d;transform:scaleX(0.947);transform-origin:left">3/7/2024 8:42 PM</div>
<div class="t" style="left:401px;top:298.84px;color:#6d6d6d">Text Document</div>
<div class="t" style="right:24px;top:298.84px;color:#6d6d6d;transform:scaleX(0.9);transform-origin:right">0 KB</div>
<svg class="a" style="left:23px;top:317px" width="12" height="16"><path d="M0.5 0.5H8.5L11.5 3.5V15.5H0.5Z" fill="#fff" stroke="#838383"/><path d="M8.5 0.5V3.5H11.5" fill="none" stroke="#838383"/><path d="M2 3.5H7M2 5.5H10M2 7.5H10M2 9.5H10M2 11.5H10M2 13.5H10" stroke="#9a9a9a" stroke-width="1"/></svg>
<div class="t" style="left:41.5px;top:319.84px;color:#000;transform:scaleX(0.987);transform-origin:left">aria-debug-1744.log</div>
<div class="t" style="left:281.20000000000005px;top:319.84px;color:#6d6d6d;transform:scaleX(0.947);transform-origin:left">3/7/2024 8:32 PM</div>
<div class="t" style="left:401px;top:319.84px;color:#6d6d6d">Text Document</div>
<div class="t" style="right:24px;top:319.84px;color:#6d6d6d;transform:scaleX(0.9);transform-origin:right">0 KB</div>
<svg class="a" style="left:23px;top:338px" width="12" height="16"><path d="M0.5 0.5H8.5L11.5 3.5V15.5H0.5Z" fill="#fff" stroke="#838383"/><path d="M8.5 0.5V3.5H11.5" fill="none" stroke="#838383"/><path d="M2 3.5H7M2 5.5H10M2 7.5H10M2 9.5H10M2 11.5H10M2 13.5H10" stroke="#9a9a9a" stroke-width="1"/></svg>
<div class="t" style="left:41.5px;top:340.84px;color:#000;transform:scaleX(0.987);transform-origin:left">aria-debug-5528.log</div>
<div class="t" style="left:281.20000000000005px;top:340.84px;color:#6d6d6d;transform:scaleX(0.947);transform-origin:left">3/7/2024 8:22 PM</div>
<div class="t" style="left:401px;top:340.84px;color:#6d6d6d">Text Document</div>
<div class="t" style="right:24px;top:340.84px;color:#6d6d6d;transform:scaleX(0.9);transform-origin:right">0 KB</div>
<svg class="a" style="left:23px;top:359px" width="12" height="16"><path d="M0.5 0.5H8.5L11.5 3.5V15.5H0.5Z" fill="#fff" stroke="#838383"/><path d="M8.5 0.5V3.5H11.5" fill="none" stroke="#838383"/><path d="M2 3.5H7M2 5.5H10M2 7.5H10M2 9.5H10M2 11.5H10M2 13.5H10" stroke="#9a9a9a" stroke-width="1"/></svg>
<div class="t" style="left:41.5px;top:361.84px;color:#000;transform:scaleX(0.987);transform-origin:left">aria-debug-1160.log</div>
<div class="t" style="left:281.20000000000005px;top:361.84px;color:#6d6d6d;transform:scaleX(0.947);transform-origin:left">3/7/2024 8:12 PM</div>
<div class="t" style="left:401px;top:361.84px;color:#6d6d6d">Text Document</div>
<div class="t" style="right:24px;top:361.84px;color:#6d6d6d;transform:scaleX(0.9);transform-origin:right">0 KB</div>
</div>
<div class="a" style="left:1052px;top:196px;width:16px;height:387px;background:#f0f0f0"></div>
<div class="a" style="left:1052px;top:317px;width:16px;height:21px;background:#cdcdcd"></div>
<svg class="a" style="left:1056px;top:202px" width="8" height="5" viewBox="0 0 8 5"><path d="M0.5 4.5L4 1L7.5 4.5" fill="none" stroke="#606060" stroke-width="1.5"/></svg>
<svg class="a" style="left:1056px;top:571px" width="8" height="5" viewBox="0 0 8 5"><path d="M0.5 0.5L4 4L7.5 0.5" fill="none" stroke="#606060" stroke-width="1.5"/></svg>
<div class="t" style="top:588.84px;font-size:12px;color:#333;left:298.3px;transform:scaleX(0.95);transform-origin:left;">291 items</div>
<div class="a" style="left:1020px;top:583px;width:22px;height:23px;background:#cce8ff;border:1px solid #6aa8d8"></div>
<svg class="a" style="left:1024px;top:588px" width="14" height="12" viewBox="0 0 14 12"><rect x="0.5" y="0.5" width="3" height="3" fill="#fff" stroke="#666"/><rect x="0.5" y="4.5" width="3" height="3" fill="#fff" stroke="#666"/><rect x="0.5" y="8.5" width="3" height="3" fill="#fff" stroke="#666"/><path d="M5 2H9M10 2H14M5 6H9M10 6H14M5 10H9M10 10H14" stroke="#555" stroke-width="1"/></svg>
<svg class="a" style="left:1046px;top:588px" width="14" height="11" viewBox="0 0 14 11"><rect x="0.5" y="0.5" width="13" height="10" fill="#fff" stroke="#888"/><rect x="2" y="2" width="10" height="7" fill="#6d8fb8"/><path d="M2 6Q6 4 12 7V9H2Z" fill="#2e4a55"/></svg>
<div class="a" style="left:0px;top:680px;width:1280px;height:40px;background:#031823"></div>
<div class="a" style="left:48px;top:680px;width:288px;height:40px;background:#f0f0f0;border:1px solid #dcdcdc"></div>
<svg class="a" style="left:16px;top:692px" width="16" height="16" viewBox="0 0 16 16"><path d="M0 2.3L6.5 1.4V7.6H0Z M7.4 1.3L16 0V7.6H7.4Z M0 8.4H6.5V14.6L0 13.7Z M7.4 8.4H16V16L7.4 14.7Z" fill="#fff"/></svg>
<svg class="a" style="left:59px;top:691px" width="17" height="17" viewBox="0 0 17 17"><circle cx="11" cy="6" r="4.6" fill="none" stroke="#000" stroke-width="1.2"/><path d="M7.7 9.3L1.5 15.5" stroke="#000" stroke-width="1.3"/></svg>
<div class="t" style="top:692.50px;font-size:15px;color:#1a1a1a;left:88.4px;transform:scaleX(0.958);transform-origin:left;">Type here to search</div>
<svg class="a" style="left:351px;top:691px" width="18" height="17" viewBox="0 0 18 17"><g fill="none" stroke="#fff" stroke-width="1.3"><path d="M1.5 0.5V3.3H12.5V0.5"/><rect x="1.5" y="5.3" width="11" height="6.4"/><path d="M1.5 16.5V13.7H12.5V16.5"/><path d="M16 0.5V3.3M16 9V16.5"/></g><rect x="14.7" y="4.8" width="2.6" height="3.2" fill="#fff"/></svg>
<svg class="a" style="left:398px;top:687px" width="25" height="26" viewBox="0 0 25 26"><defs><linearGradient id="tega" x1="0" y1="0.2" x2="1" y2="0.6"><stop offset="0" stop-color="#2aa6e6"/><stop offset="0.5" stop-color="#33c2c0"/><stop offset="1" stop-color="#5ed84c"/></linearGradient><linearGradient id="tegb" x1="0" y1="0" x2="0.8" y2="1"><stop offset="0" stop-color="#2388dc"/><stop offset="0.6" stop-color="#1262bd"/><stop offset="1" stop-color="#0f4c9e"/></linearGradient></defs><g transform="scale(0.5)"><path d="M2.5 28C2.5 13 13 2.5 25.5 2.5C38 2.5 48 12 48 23.5C48 30.5 43.5 35 37 35C31 35 27.5 31.5 27.5 27.5C27.5 21 21 16.5 15 16.5C9 16.5 4 21 2.5 28Z" fill="url(#tega)"/><circle cx="30" cy="28.5" r="7.5" fill="#36aee8"/><path d="M2.5 28C4 20 10 16 16.5 16C24 16 30 19.5 30.5 23C27 20.5 19.5 23 19.5 31C19.5 40 28 46.5 37 45.5C41 45 44 43 46.5 40.5C42.5 47 35 50.5 25.5 50.5C12 50.5 2.5 40.5 2.5 28Z" fill="url(#tegb)"/></g></svg>
<div class="a" style="left:436px;top:680px;width:48px;height:40px;background:#37464e"></div>
<div class="a" style="left:436px;top:718px;width:48px;height:2px;background:#7cb6ea"></div>
<svg class="a" style="left:448px;top:688px" width="24" height="21" viewBox="0 0 24 21"><path d="M0.5 1H9L11 3H23.5V6H0.5Z" fill="#2a3a2a"/><path d="M0.5 2.5H9L10.5 4H23V20H0.5Z" fill="#e8b83a"/><rect x="1" y="5" width="22" height="15" fill="#fcd860"/><path d="M6.5 11.5H17.5V20H14V16H10V20H6.5Z" fill="#3f8fdc"/><rect x="10" y="15.5" width="4" height="3.5" fill="#f5c542"/></svg>
<svg class="a" style="left:497px;top:688px" width="24" height="24" viewBox="0 0 24 24"><defs><radialGradient id="tff1" cx="0.7" cy="0.2" r="0.9"><stop offset="0" stop-color="#fff44f"/><stop offset="0.35" stop-color="#ffb52c"/><stop offset="0.7" stop-color="#ff5a2c"/><stop offset="1" stop-color="#f5196e"/></radialGradient><radialGradient id="tff2" cx="0.4" cy="0.3" r="0.8"><stop offset="0" stop-color="#9d5cf5"/><stop offset="1" stop-color="#5b35d0"/></radialGradient></defs><g transform="scale(0.5)"><path d="M33 2C38 8 47 14 47 26C47 39 37 48 24 48C11 48 2 39 2 27C2 19 6 14 8 11C8 14 9 16 10 17C11 13 13 10 16 9C16 12 17 14 19 15C22 13 28 12 31 14C34 10 33 5 33 2Z" fill="url(#tff1)"/><circle cx="25" cy="28" r="10.5" fill="url(#tff2)"/></g></svg>
<svg class="a" style="left:1073px;top:696px" width="12" height="7" viewBox="0 0 12 7"><path d="M0.8 6.2L6 1L11.2 6.2" fill="none" stroke="#fff" stroke-width="1.1"/></svg>
<svg class="a" style="left:1097px;top:692px" width="13" height="16" viewBox="0 0 13 16"><g fill="none" stroke="#fff" stroke-width="1.1"><path d="M2 3.5A6 6 0 0 1 11 3.5M2 12.5A6 6 0 0 0 11 12.5"/><rect x="1.5" y="5.5" width="6.5" height="5"/><path d="M8 8L11.5 6V10Z"/></g></svg>
<svg class="a" style="left:1119px;top:693px" width="17" height="15" viewBox="0 0 17 15"><g fill="none" stroke="#fff" stroke-width="1.1"><rect x="3.5" y="1.5" width="13" height="9"/><path d="M10 10.5V13.5M6 13.5H14"/></g><rect x="0" y="2" width="6" height="4" fill="#031823"/><path d="M0.5 2.5H5.5V5.5H0.5Z M3 5.5V7" fill="none" stroke="#fff" stroke-width="1"/></svg>
<svg class="a" style="left:1142px;top:693px" width="18" height="14" viewBox="0 0 18 14"><g fill="none" stroke="#fff" stroke-width="1.1"><path d="M0.5 4.5H3.5L7.5 0.8V13.2L3.5 9.5H0.5Z"/><path d="M10 4.5A3 3 0 0 1 10 9.5M12.5 2.5A6 6 0 0 1 12.5 11.5M15 0.8A9 9 0 0 1 15 13.2"/></g></svg>
<div class="t" style="top:685.24px;font-size:12px;color:#fff;left:1095px;width:200px;text-align:center;transform:scaleX(0.91);transform-origin:center;">12:19 PM</div>
<div class="t" style="top:703.24px;font-size:12px;color:#fff;left:1095px;width:200px;text-align:center;transform:scaleX(0.97);transform-origin:center;">3/24/2025</div>
<svg class="a" style="left:1238px;top:692px" width="18" height="16" viewBox="0 0 18 16"><path d="M1 1H17V12.5H9.5L7 15L4.5 12.5H1Z" fill="none" stroke="#fff" stroke-width="1.1"/></svg>
<div class="a" style="left:1275px;top:680px;width:1px;height:40px;background:#5a636b"></div>
<svg class="a" style="left:0;top:0" width="1280" height="720"><g fill="none" stroke="#a8bbea" stroke-opacity="0.9" stroke-width="3.6" stroke-linejoin="round" stroke-linecap="round"><path d="M1040.5 659L1047.5 622.8H1050.5L1057.5 659M1043 648.5H1055"/><path d="M1064.5 659V622.8L1078.3 659V622.8"/><path d="M1085 622.8L1093.5 641L1102 622.8M1093.5 641V659"/><path d="M1116 617Q1112.5 617 1112.5 620.5V662L1163 645.5L1126 624"/><path d="M1158.5 637.5L1162 635L1122 611.5V653L1150 643"/><path d="M1173 659V622.8H1179.5Q1186.5 622.8 1186.5 631.5Q1186.5 640.2 1179.5 640.2H1173M1180 640.2L1187.5 659"/><path d="M1194.4 622.8V650Q1194.4 659 1200.8 659Q1207.2 659 1207.2 650V622.8"/><path d="M1215.5 659V622.8L1229.4 659V622.8"/></g></svg>
<div class="t" style="top:631.84px;font-size:12px;color:#fff;right:6px;transform:scaleX(0.93);transform-origin:right;">Test Mode</div>
<div class="t" style="top:647.84px;font-size:12px;color:#fff;right:6px;transform:scaleX(0.96);transform-origin:right;">Windows 10 Pro</div>
<div class="t" style="top:664.84px;font-size:12px;color:#fff;right:6px;transform:scaleX(0.92);transform-origin:right;">Build 19041.vb_release.191206-1406</div>
<svg class="a" style="left:312px;top:81px" width="22" height="21" viewBox="0 0 22 21"><path d="M2 20L8.5 13.5" stroke="#8b9497" stroke-width="2.2" stroke-linecap="round"/><path d="M4.5 10.5L11.5 17.5L13 13L17 9L19.5 9.5L12.5 2.5L13 5L9 9Z" fill="#8b9497"/></svg>
<svg class="a" style="left:365px;top:78px" width="26" height="28" viewBox="0 0 26 28"><path d="M1.5 0.5H12.5L16.5 4.5V19.5H1.5Z" fill="#eef2fa" stroke="#a4adbf"/><path d="M4 5H10M4 7.5H14M4 10H14M4 12.5H14M4 15H14" stroke="#c3cad8"/><path d="M9.5 8.5H20.5L24.5 12.5V27.5H9.5Z" fill="#eef2fa" stroke="#a4adbf"/><path d="M12 13H18M12 15.5H22M12 18H22M12 20.5H22M12 23H22M12 25.5H22" stroke="#a8b2c6"/></svg>
<svg class="a" style="left:409px;top:77px" width="22" height="30" viewBox="0 0 22 30"><rect x="1.5" y="3" width="19" height="25.5" rx="1" fill="#e9eef9" stroke="#8f97a8" stroke-width="2"/><rect x="6" y="1.5" width="10" height="4" rx="1" fill="#8f97a8"/><path d="M5 11H17M5 14H17M5 17H17M5 20H17M5 23H17" stroke="#c4cbdb"/></svg>
<svg class="a" style="left:445px;top:75px" width="14" height="18" viewBox="0 0 14 18"><g fill="none" stroke="#8c96a0" stroke-width="1.6"><path d="M3 0.5L9 11M11 0.5L5 11"/><circle cx="3.8" cy="14" r="2.8"/><circle cx="10.2" cy="14" r="2.8"/></g></svg>
<svg class="a" style="left:443px;top:101px" width="17" height="11" viewBox="0 0 17 11"><rect x="0.5" y="0.5" width="15.5" height="9.5" fill="#dfe5f2" stroke="#b8c0d2"/><path d="M2.5 3L4 7.5L5.5 4L7 7.5L8.5 3" fill="none" stroke="#6e7788" stroke-width="0.9"/><path d="M10 6.5H11M12.3 6.5H13.3" stroke="#6e7788"/></svg>
<svg class="a" style="left:444px;top:120px" width="15" height="17" viewBox="0 0 15 17"><rect x="1" y="2" width="13" height="14" fill="#e9eef9" stroke="#8f97a8" stroke-width="1.6"/><rect x="4" y="0.5" width="7" height="3" fill="#8f97a8"/><path d="M5 13C5 10 6.5 8 9 8V9.8L11.5 7L9 4.5V6.3C6 6.5 4.5 9 5 13Z" fill="#5a6a88"/></svg>
<svg class="a" style="left:555px;top:83px" width="15" height="17" viewBox="0 0 15 17"><path d="M0.5 0.5H10.5L13.5 3.5V16.5H0.5Z" fill="#e3e8f3" stroke="#c3cad8"/><path d="M13 9L9 9V7L5.5 10.5L9 14V12H13Z" fill="#9fb0cc"/></svg>
<svg class="a" style="left:555px;top:112px" width="16" height="17" viewBox="0 0 16 17"><path d="M0.5 0.5H9.5L11.5 2.5V13.5H0.5Z" fill="#e3e8f3" stroke="#c3cad8"/><path d="M3.5 3.5H12.5L15.5 6.5V16.5H3.5Z" fill="#eef1f8" stroke="#b5bdcc"/><path d="M6 8H13M6 10H13M6 12H13M6 14H13" stroke="#b9c1d0"/></svg>
<svg class="a" style="left:640px;top:85px" width="14" height="14" viewBox="0 0 14 14"><path d="M1.5 1.5L12.5 12.5M12.5 1.5L1.5 12.5" stroke="#6c7d92" stroke-width="2.6"/></svg>
<svg class="a" style="left:639px;top:113px" width="17" height="15" viewBox="0 0 17 15"><rect x="0.5" y="3.5" width="14" height="7" fill="#c9d5ec" stroke="#aab6cc"/><rect x="2.5" y="5.5" width="7" height="3" fill="#8a9cbc"/><path d="M12.5 0.5V14.5M10.5 0.5H14.5M10.5 14.5H14.5" stroke="#6a7486" stroke-width="1"/></svg>
<svg class="a" style="left:724px;top:79px" width="21" height="27" viewBox="0 0 21 27"><defs><linearGradient id="nf" x1="0" x2="1"><stop offset="0" stop-color="#f7dc7a"/><stop offset="1" stop-color="#f2c84a"/></linearGradient></defs><path d="M1 1H14L20 4V25L7 22H1Z" fill="url(#nf)"/><path d="M1 1H14V22L7 26V5Z" fill="#f9e18e" opacity="0.7"/><path d="M7 5L14 1V22L7 26Z" fill="#f4cf5a"/></svg>
<svg class="a" style="left:760px;top:75px" width="26" height="18" viewBox="0 0 26 18"><rect x="1.5" y="1.5" width="10.5" height="7" fill="#d9eef2" stroke="#5e7f86"/><path d="M4 4H9M4 6H7" stroke="#4a6a70" stroke-width="0.8"/><rect x="5.5" y="4.5" width="6.5" height="8.5" fill="#fff" stroke="#777"/><path d="M9.5 7.5H15L16.5 9V16.5H9.5Z" fill="#fff" stroke="#777"/><path d="M11 10H15M11 12H15M11 14H15M12.5 9V16" stroke="#9a9a9a" stroke-width="0.8"/><path d="M19 7.2H24.2L21.6 10Z" fill="#111"/></svg>
<svg class="a" style="left:760px;top:97px" width="26" height="18" viewBox="0 0 26 18"><path d="M4.5 1.5H13L15.5 4V16.5H4.5Z" fill="#fff" stroke="#777"/><path d="M13 1.5V4H15.5" fill="none" stroke="#999"/><path d="M1.5 4.5H8M1 6.5H8M1.5 8.5H8" stroke="#2c5d94" stroke-width="1.1"/><path d="M4.5 3V11" stroke="#2c5d94" stroke-width="1"/><path d="M19 7.2H24.2L21.6 10Z" fill="#111"/></svg>
<svg class="a" style="left:815px;top:77px" width="23" height="30" viewBox="0 0 23 30"><path d="M0.5 0.5H16L22.5 7V28.5H0.5Z" fill="#fff" stroke="#8c8c8c"/><path d="M16 0.5V7H22.5" fill="#f0f0f0" stroke="#8c8c8c"/><path d="M4 15.5L8.5 20L19 10" fill="none" stroke="#dd5a36" stroke-width="2.6"/></svg>
<svg class="a" style="left:860px;top:75px" width="16" height="18" viewBox="0 0 16 18"><rect x="1.5" y="0.5" width="11" height="15" fill="#eef1f8" stroke="#aab3c4"/><path d="M4 3H6M4 6H6M4 9H6M4 12H6M7 3H10M7 6H10M7 9H10" stroke="#8a97ae"/><path d="M12 9L15.5 12.5H13.5V16.5H10.5V12.5H8.5Z" fill="#8e9bb2"/></svg>
<svg class="a" style="left:860px;top:97px" width="17" height="18" viewBox="0 0 17 18"><path d="M1.5 0.5H10.5L13.5 3.5V16.5H1.5Z" fill="#eef1f8" stroke="#b4bccb"/><path d="M4 14L15 4" stroke="#a6b0c2" stroke-width="2"/></svg>
<svg class="a" style="left:858px;top:119px" width="18" height="18" viewBox="0 0 18 18"><rect x="1.5" y="0.5" width="10" height="14" fill="#e6eaf2" stroke="#c5ccd8"/><circle cx="11.5" cy="11.5" r="5.5" fill="#e9eef7" stroke="#9aa6bb" stroke-width="1.6"/><path d="M11.5 11.5L14 9" stroke="#9aa6bb" stroke-width="1.4"/></svg>
<svg class="a" style="left:934px;top:75px" width="18" height="18" viewBox="0 0 18 18"><rect x="1" y="1" width="16" height="16" fill="#a9d5f6" stroke="#3f86c8" stroke-width="1.6"/><path d="M9 1V17M1 9H17" stroke="#3f86c8" stroke-width="1.6"/><g fill="#cfe8fb"><rect x="3" y="3" width="4" height="4"/><rect x="11" y="3" width="4" height="4"/><rect x="3" y="11" width="4" height="4"/><rect x="11" y="11" width="4" height="4"/></g></svg>
<svg class="a" style="left:935px;top:99px" width="16" height="14" viewBox="0 0 16 14"><g fill="#fff" stroke="#9a9a9a"><rect x="0.5" y="0.5" width="5.5" height="5.5"/><rect x="9.5" y="0.5" width="5.5" height="5.5"/><rect x="0.5" y="7.5" width="5.5" height="5.5"/><rect x="9.5" y="7.5" width="5.5" height="5.5"/></g></svg>
<svg class="a" style="left:934px;top:120px" width="18" height="17" viewBox="0 0 18 17"><g fill="#fff" stroke="#9a9a9a"><rect x="1.5" y="1.5" width="5.5" height="5.5"/><rect x="10.5" y="9.5" width="5.5" height="5.5"/></g><g fill="#a9d5f6" stroke="#3f86c8" stroke-width="1.4"><rect x="9.7" y="0.7" width="7.3" height="7.3"/><rect x="0.7" y="8.7" width="7.3" height="7.3"/></g></svg>
</body></html>
